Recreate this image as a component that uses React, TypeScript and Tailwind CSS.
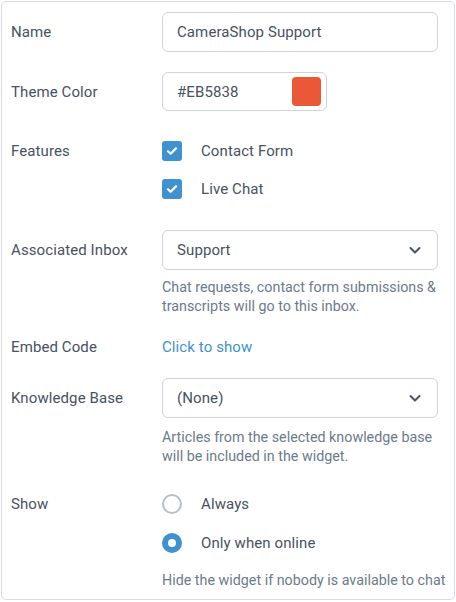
import React from "react";

const Chevron = () => (
  <svg width="14" height="14" viewBox="0 0 14 14" fill="none">
    <path d="M2.5 5l4.5 4.5L11.5 5" stroke="#4a5563" strokeWidth="2" strokeLinecap="round" strokeLinejoin="round" />
  </svg>
);

const Checkbox = () => (
  <div className="w-[20px] h-[20px] rounded-[3px] bg-[#3f91cf] flex items-center justify-center shrink-0">
    <svg width="12" height="12" viewBox="0 0 12 12" fill="none">
      <path d="M2 6.3l2.6 2.5L10 3.4" stroke="#fff" strokeWidth="2.2" strokeLinecap="round" strokeLinejoin="round" />
    </svg>
  </div>
);

const Radio = ({ checked }: { checked?: boolean }) =>
  checked ? (
    <div className="w-[20px] h-[20px] rounded-full bg-[#3f91cf] flex items-center justify-center shrink-0">
      <div className="w-[8px] h-[8px] rounded-full bg-white" />
    </div>
  ) : (
    <div className="w-[20px] h-[20px] rounded-full border-2 border-[#b6bec6] shrink-0" />
  );

export default function App() {
  return (
    <div className="p-px" style={{ fontFamily: "Roboto, 'Liberation Sans', sans-serif" }}>
      <div className="w-[454px] h-[599px] border border-[#d9dde2] rounded-[5px] bg-white pl-[9px] pr-[16px] pt-[10px] text-[15px] tracking-[0.1px] text-[#475261]">
        {/* Name */}
        <div className="flex">
          <div className="w-[151px] shrink-0 h-[40px] flex items-center pt-px">Name</div>
          <div className="flex-1 h-[40px] border border-[#cdd4db] rounded-[6px] flex items-center px-[14px] pt-px">
            CameraShop Support
          </div>
        </div>
        {/* Theme color */}
        <div className="flex mt-[20px]">
          <div className="w-[151px] shrink-0 h-[39px] flex items-center pt-px">Theme Color</div>
          <div className="w-[165px] h-[39px] border border-[#cdd4db] rounded-[6px] flex items-center pl-[14px] pr-[5px] justify-between">
            <span className="pt-px">#EB5838</span>
            <div className="w-[29px] h-[29px] rounded-[4px] bg-[#EB5838]" />
          </div>
        </div>
        {/* Features */}
        <div className="flex mt-[30px]">
          <div className="w-[151px] shrink-0 h-[20px] flex items-center pt-px">Features</div>
          <div className="flex flex-col gap-[18px]">
            <div className="flex items-center h-[20px]">
              <Checkbox />
              <span className="ml-[19px] pt-px">Contact Form</span>
            </div>
            <div className="flex items-center h-[20px]">
              <Checkbox />
              <span className="ml-[19px] pt-px">Live Chat</span>
            </div>
          </div>
        </div>
        {/* Associated Inbox */}
        <div className="flex mt-[31px]">
          <div className="w-[151px] shrink-0 h-[40px] flex items-center pt-px">Associated Inbox</div>
          <div className="flex-1">
            <div className="h-[40px] border border-[#cdd4db] rounded-[6px] flex items-center justify-between pl-[14px] pr-[15px]">
              <span className="pt-px">Support</span>
              <Chevron />
            </div>
            <div className="mt-[8px] text-[14.3px] tracking-normal leading-[19px] text-[#6c7b8b]">
              Chat requests, contact form submissions &amp; transcripts will go to this inbox.
            </div>
          </div>
        </div>
        {/* Embed Code */}
        <div className="flex mt-[21px]">
          <div className="w-[151px] shrink-0 h-[20px] flex items-center pt-px">Embed Code</div>
          <div className="h-[20px] flex items-center pt-px text-[#3f91cf]">Click to show</div>
        </div>
        {/* Knowledge Base */}
        <div className="flex mt-[21px]">
          <div className="w-[151px] shrink-0 h-[40px] flex items-center pt-px">Knowledge Base</div>
          <div className="flex-1">
            <div className="h-[40px] border border-[#cdd4db] rounded-[6px] flex items-center justify-between pl-[14px] pr-[15px]">
              <span className="pt-px">(None)</span>
              <Chevron />
            </div>
            <div className="mt-[10px] text-[14.3px] tracking-normal leading-[18.5px] text-[#6c7b8b]">
              Articles from the selected knowledge base will be included in the widget.
            </div>
          </div>
        </div>
        {/* Show */}
        <div className="flex mt-[29px]">
          <div className="w-[151px] shrink-0 h-[20px] flex items-center pt-px">Show</div>
          <div className="flex flex-col">
            <div className="flex items-center h-[20px]">
              <Radio />
              <span className="ml-[19px] pt-px">Always</span>
            </div>
            <div className="flex items-center h-[20px] mt-[19px]">
              <Radio checked />
              <span className="ml-[19px] pt-px">Only when online</span>
            </div>
            <div className="mt-[18px] text-[14.3px] tracking-normal leading-[19px] text-[#6c7b8b] whitespace-nowrap">
              Hide the widget if nobody is available to chat
            </div>
          </div>
        </div>
      </div>
    </div>
  );
}
